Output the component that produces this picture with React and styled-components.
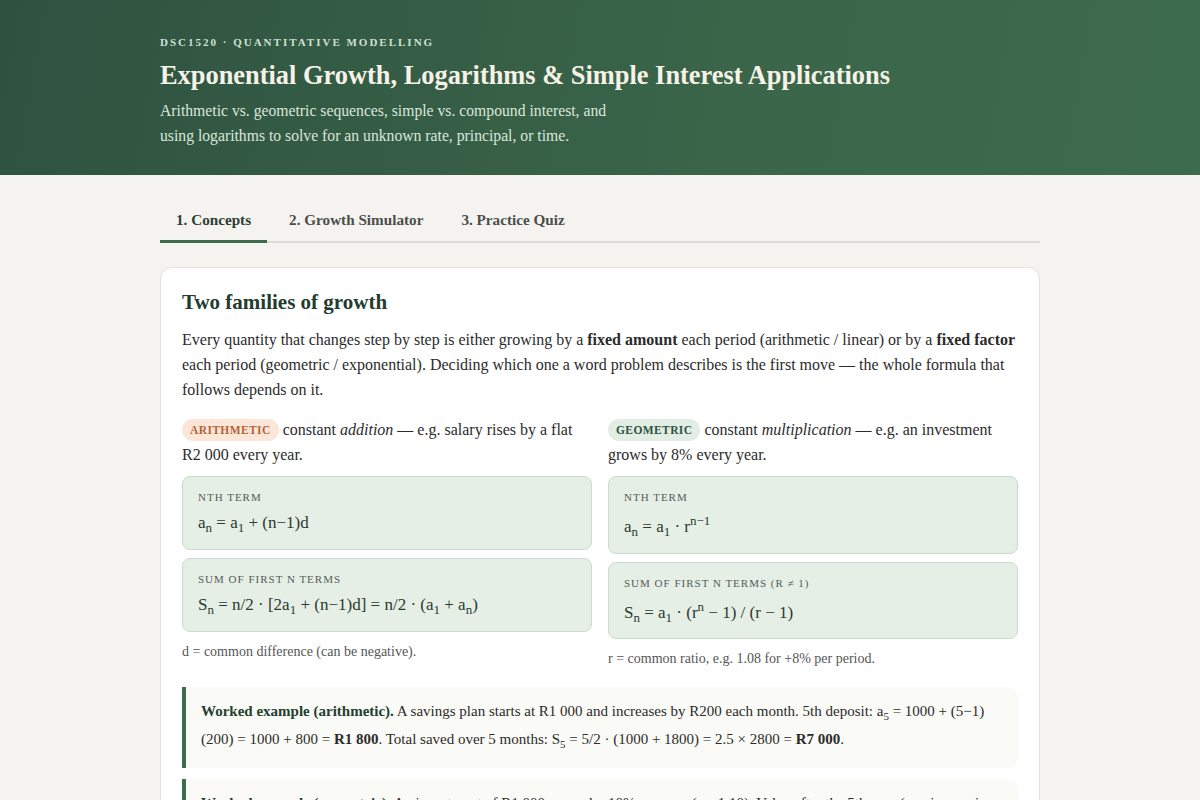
import React, { useState } from "react";
import styled, { createGlobalStyle } from "styled-components";

const GlobalStyle = createGlobalStyle`
  * { box-sizing: border-box; }
  body {
    margin: 0;
    background: #f5f3ef;
    font-family: "Liberation Serif", "Times New Roman", serif;
    color: #2b2b2b;
  }
`;

const Header = styled.header`
  background: linear-gradient(100deg, #2e5240 0%, #3a6549 60%, #3d6b4e 100%);
  padding: 36px 0 27px;
`;

const Wrap = styled.div`
  width: 880px;
  margin: 0 auto;
`;

const Kicker = styled.div`
  font-size: 11px;
  line-height: 13px;
  font-weight: 700;
  letter-spacing: 2px;
  text-transform: uppercase;
  color: #cfe0d2;
`;

const Title = styled.h1`
  margin: 8px 0 5px;
  font-size: 26.4px;
  line-height: 36px;
  font-weight: 700;
  color: #f6f2e7;
`;

const Lede = styled.p`
  margin: 0;
  font-size: 15.7px;
  line-height: 25px;
  color: #d9e6da;
  max-width: 460px;
`;

const Tabs = styled.nav`
  display: flex;
  gap: 6px;
  margin-top: 25px;
  border-bottom: 2px solid #dddbd4;
`;

const Tab = styled.button`
  background: none;
  border: none;
  font-family: inherit;
  font-size: 15.2px;
  line-height: 17px;
  font-weight: 700;
  color: ${(p) => (p.$active ? "#2c3e35" : "#4a4f4a")};
  padding: 11px 16px 12px 16px;
  margin-bottom: -2px;
  border-bottom: 3px solid ${(p) => (p.$active ? "#3d6b4e" : "transparent")};
  cursor: pointer;
`;

const Card = styled.section`
  margin-top: 24px;
  background: #fff;
  border: 1px solid #e4e1da;
  border-radius: 12px;
  padding: 20px 21px 30px;
`;

const H2 = styled.h2`
  margin: 0 0 11px;
  font-size: 21px;
  line-height: 28px;
  color: #223d2f;
`;

const P = styled.p`
  margin: 0 0 15px;
  font-size: 16px;
  line-height: 25px;
  color: #2b2b2b;
`;

const Cols = styled.div`
  display: grid;
  grid-template-columns: 1fr 1fr;
  gap: 16px;
  margin-bottom: 18px;
`;

const Col = styled.div`
  display: flex;
  flex-direction: column;
`;

const Intro = styled.p`
  margin: 0 0 9px;
  font-size: 16px;
  line-height: 25px;
`;

const Pill = styled.span`
  display: inline-block;
  padding: 2px 8px;
  margin-right: 0;
  border-radius: 12px;
  font-size: 11.5px;
  line-height: 18px;
  font-weight: 700;
  letter-spacing: 0.4px;
  vertical-align: 1px;
  background: ${(p) => (p.$tone === "warm" ? "#fbe6d8" : "#e2ede4")};
  color: ${(p) => (p.$tone === "warm" ? "#b2653a" : "#2e5240")};
`;

const Formula = styled.div`
  background: #e5efe6;
  border: 1px solid #c9dccb;
  border-radius: 8px;
  padding: 14px 15px 13px;
  margin-bottom: 8px;
`;

const Label = styled.div`
  font-size: 11px;
  line-height: 13px;
  letter-spacing: 1px;
  text-transform: uppercase;
  color: #555d57;
  margin-bottom: 6px;
`;

const Expr = styled.div`
  font-size: 17px;
  line-height: 26px;
  color: #2b3a30;

  sub {
    font-size: 13px;
    line-height: 0;
  }

  sup {
    font-size: 13px;
    line-height: 22px;
  }
`;

const Note = styled.div`
  margin-top: 2px;
  font-size: 14px;
  line-height: 20px;
  color: #555;
`;

const Example = styled.div`
  background: #fafaf6;
  border-left: 4px solid #3d6b4e;
  border-radius: 0 10px 10px 0;
  padding: 10px 18px 15px 15px;
  margin-bottom: 11px;
  font-size: 15px;
  line-height: 28px;
  color: #2b2b2b;

  b.lead {
    color: #233f30;
  }

  sub, sup {
    font-size: 11px;
    line-height: 0;
  }
`;

export default function App() {
  const [tab, setTab] = useState(0);
  const tabs = ["1. Concepts", "2. Growth Simulator", "3. Practice Quiz"];

  return (
    <>
      <GlobalStyle />
      <Header>
        <Wrap>
          <Kicker>DSC1520 · Quantitative Modelling</Kicker>
          <Title>Exponential Growth, Logarithms &amp; Simple Interest Applications</Title>
          <Lede>
            Arithmetic vs. geometric sequences, simple vs. compound interest, and
            using logarithms to solve for an unknown rate, principal, or time.
          </Lede>
        </Wrap>
      </Header>

      <Wrap>
        <Tabs>
          {tabs.map((t, i) => (
            <Tab key={t} $active={tab === i} onClick={() => setTab(i)}>
              {t}
            </Tab>
          ))}
        </Tabs>

        <Card>
          <H2>Two families of growth</H2>
          <P>
            Every quantity that changes step by step is either growing by a <b>fixed amount</b> each
            period (arithmetic / linear) or by a <b>fixed factor</b> each period (geometric /
            exponential). Deciding which one a word problem describes is the first move — the whole
            formula that follows depends on it.
          </P>

          <Cols>
            <Col>
              <Intro>
                <Pill $tone="warm">ARITHMETIC</Pill> constant <i>addition</i> — e.g. salary rises by a
                flat R2 000 every year.
              </Intro>
              <Formula>
                <Label>nth term</Label>
                <Expr>
                  a<sub>n</sub> = a<sub>1</sub> + (n−1)d
                </Expr>
              </Formula>
              <Formula>
                <Label>Sum of first n terms</Label>
                <Expr>
                  S<sub>n</sub> = n/2 · [2a<sub>1</sub> + (n−1)d] = n/2 · (a<sub>1</sub> + a
                  <sub>n</sub>)
                </Expr>
              </Formula>
              <Note>d = common difference (can be negative).</Note>
            </Col>
            <Col>
              <Intro>
                <Pill>GEOMETRIC</Pill> constant <i>multiplication</i> — e.g. an investment grows by
                8% every year.
              </Intro>
              <Formula>
                <Label>nth term</Label>
                <Expr>
                  a<sub>n</sub> = a<sub>1</sub> · r<sup>n−1</sup>
                </Expr>
              </Formula>
              <Formula>
                <Label>Sum of first n terms (r ≠ 1)</Label>
                <Expr>
                  S<sub>n</sub> = a<sub>1</sub> · (r<sup>n</sup> − 1) / (r − 1)
                </Expr>
              </Formula>
              <Note>r = common ratio, e.g. 1.08 for +8% per period.</Note>
            </Col>
          </Cols>

          <Example>
            <b className="lead">Worked example (arithmetic).</b> A savings plan starts at R1 000 and
            increases by R200 each month. 5th deposit: a<sub>5</sub> = 1000 + (5−1)(200) = 1000 + 800 ={" "}
            <b>R1 800</b>. Total saved over 5 months: S<sub>5</sub> = 5/2 · (1000 + 1800) = 2.5 × 2800 ={" "}
            <b>R7 000</b>.
          </Example>
          <Example>
            <b className="lead">Worked example (geometric).</b> An investment of R1 000 grows by 10% per
            year (r = 1.10). Value after the 5th year (a<sub>6</sub>, since a<sub>1</sub> is the start):
            1000 · 1.10<sup>5</sup> ≈ <b>R1 610.51</b>.
          </Example>
        </Card>
      </Wrap>
    </>
  );
}
